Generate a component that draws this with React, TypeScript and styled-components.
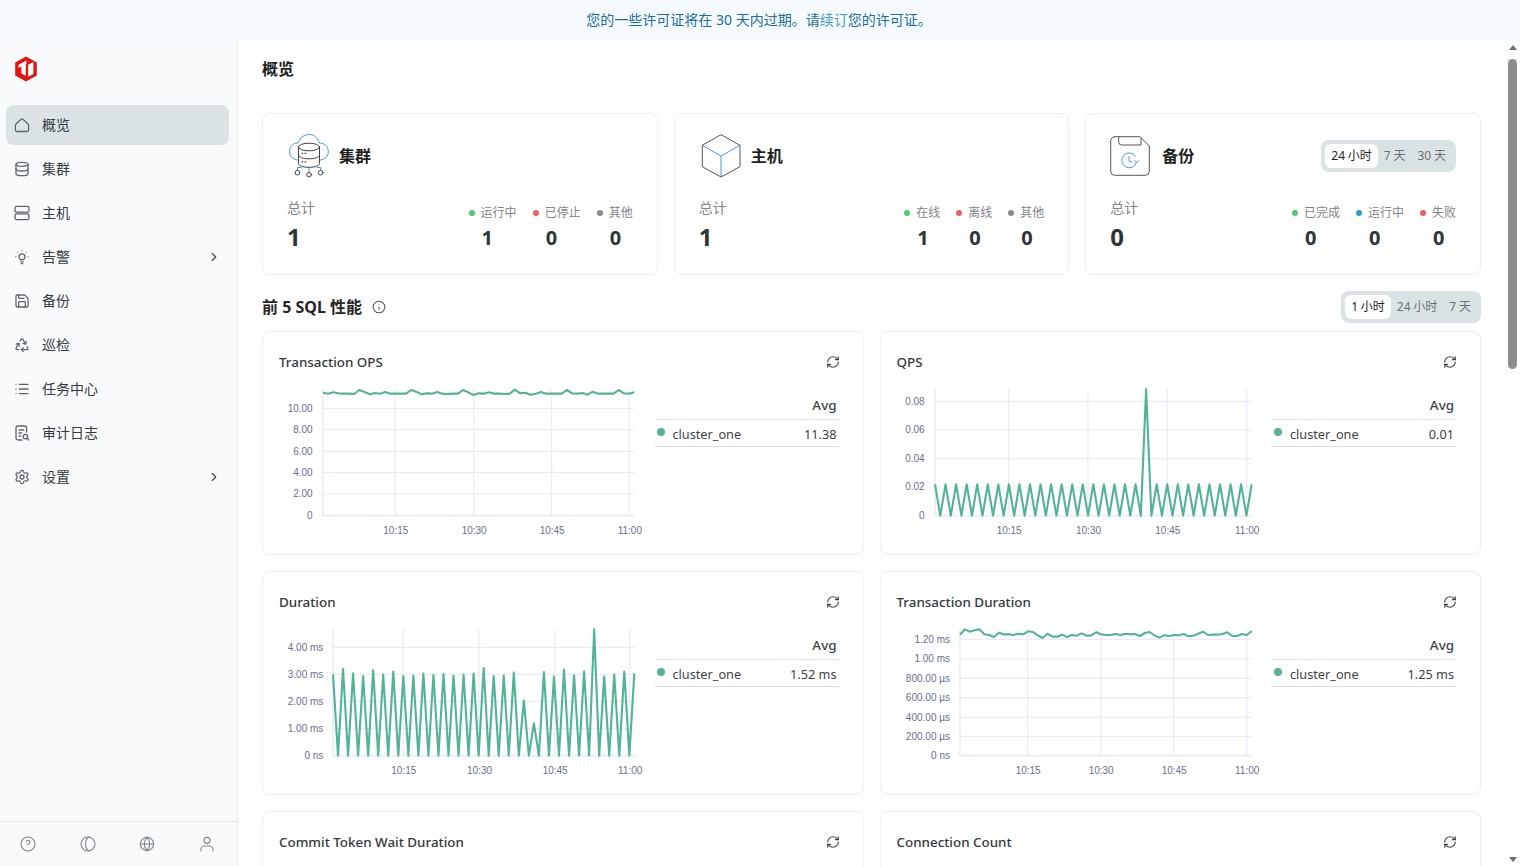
import React from "react";
import styled, { createGlobalStyle } from "styled-components";
import { Database, Recycle, List, Settings, ChevronRight, Globe, RefreshCw, Info, Save } from "lucide-react";

const Global = createGlobalStyle`
  html, body { margin: 0; padding: 0; height: 100%; overflow: hidden; background: #fefefe; }
  body { font-family: "Noto Sans", "Noto Sans CJK SC", sans-serif; color: #262626; }
  * { box-sizing: border-box; }
`;

const Shell = styled.div`
  display: flex;
  flex-direction: column;
  width: 1520px;
  height: 866px;
  overflow: hidden;
`;
const Banner = styled.div`
  height: 41px;
  flex: none;
  background: #f5fafe;
  color: #1c6c9c;
  font-size: 14px;
  line-height: 40px;
  text-align: center;
  padding-right: 2px;
`;
const BannerLink = styled.a`
  color: #4a9bc9;
`;
const Body = styled.div`
  display: flex;
  flex: 1;
  min-height: 0;
`;
const Sidebar = styled.aside`
  width: 238px;
  flex: none;
  display: flex;
  flex-direction: column;
  background: #f9fafc;
  border-right: 1px solid #eef0f2;
`;
const LogoWrap = styled.div`
  height: 64px;
  padding: 15px 0 0 14px;
  display: flex;
  align-items: flex-start;
`;
const Nav = styled.nav`
  display: flex;
  flex-direction: column;
  gap: 4px;
  padding: 0 8px 0 6px;
`;
const NavItem = styled.div<{ $active?: boolean }>`
  height: 40px;
  display: flex;
  align-items: center;
  padding: 0 8px;
  gap: 12px;
  border-radius: 8px;
  font-size: 14px;
  color: #333b3f;
  background: ${(p) => (p.$active ? "#dce3e4" : "transparent")};
  svg { color: #5f6569; flex: none; }
`;
const NavLabel = styled.span`
  flex: 1;
  padding-bottom: 2px;
`;
const NavChevron = styled(ChevronRight)`
  && { color: #3d4347; }
`;
const SideFooter = styled.div`
  margin-top: auto;
  height: 45px;
  border-top: 1px solid #e5e8ea;
  display: flex;
  align-items: center;
  justify-content: space-between;
  padding: 0 22px 0 20px;
  color: #7d8488;
`;
const Main = styled.main`
  flex: 1;
  min-width: 0;
  overflow: hidden;
  padding: 16px 24px 0;
`;
const PageTitle = styled.h1`
  margin: 0 0 32px;
  font-size: 16px;
  line-height: 24px;
  font-weight: 700;
  color: #1f1f1f;
`;
const StatGrid = styled.div`
  display: grid;
  grid-template-columns: repeat(3, 1fr);
  gap: 16px;
`;
const Card = styled.section`
  background: #fff;
  border: 1px solid #edf0f2;
  border-radius: 8px;
`;
const StatCard = styled(Card)`
  height: 162px;
  padding: 19px 24px 20px;
`;
const StatHead = styled.div`
  display: flex;
  align-items: center;
  gap: 8px;
  height: 46px;
`;
const StatTitle = styled.h2`
  margin: 0;
  flex: 1;
  padding-bottom: 2px;
  font-size: 16px;
  font-weight: 700;
  color: #1f1f1f;
`;
const StatBody = styled.div`
  margin-top: 19px;
  display: flex;
  justify-content: space-between;
  align-items: flex-end;
`;
const TotalLabel = styled.div`
  font-size: 14px;
  line-height: 20px;
  color: #7f8487;
`;
const TotalValue = styled.div`
  margin-top: 3px;
  margin-bottom: 1px;
  font-size: 24px;
  line-height: 32px;
  font-weight: 700;
  color: #2f3437;
`;
const SubStats = styled.div`
  display: flex;
  gap: 16px;
  margin-bottom: 2px;
`;
const SubLabel = styled.div`
  display: flex;
  align-items: center;
  gap: 6px;
  margin-top: 1px;
  font-size: 12px;
  line-height: 16px;
  color: #7f8487;
`;
const Dot = styled.i<{ $color: string }>`
  width: 6px;
  height: 6px;
  border-radius: 50%;
  background: ${(p) => p.$color};
`;
const SubValue = styled.div`
  margin-top: 3px;
  padding-left: 13px;
  font-size: 20px;
  line-height: 28px;
  font-weight: 700;
  color: #2f3437;
`;
const Segmented = styled.div`
  display: flex;
  padding: 4px;
  border-radius: 8px;
  background: #dbe2e4;
`;
const Segment = styled.span<{ $active?: boolean }>`
  padding: 0 6px;
  height: 24px;
  line-height: 24px;
  font-size: 12px;
  word-spacing: -0.35px;
  border-radius: 6px;
  white-space: nowrap;
  color: ${(p) => (p.$active ? "#1f1f1f" : "#6b7275")};
  background: ${(p) => (p.$active ? "#fff" : "transparent")};
`;
const SectionRow = styled.div`
  margin: 16px 0 8px;
  height: 32px;
  display: flex;
  align-items: center;
  justify-content: space-between;
`;
const SectionTitle = styled.h2`
  margin: 0;
  display: flex;
  align-items: center;
  gap: 10px;
  padding-bottom: 2px;
  font-size: 16px;
  font-weight: 700;
  color: #262626;
  svg { color: #555; margin-top: 2px; }
`;
const ChartGrid = styled.div`
  display: grid;
  grid-template-columns: repeat(2, 1fr);
  gap: 16px;
`;
const ChartCard = styled(Card)`
  height: 224px;
  padding: 16px;
`;
const ChartHead = styled.div`
  height: 28px;
  display: flex;
  align-items: center;
  justify-content: space-between;
  padding-right: 7px;
  margin-bottom: 4px;
  font-size: 13.4px;
  font-weight: 500;
  color: #33393c;
  svg { color: #444; }
`;
const ChartRow = styled.div`
  display: flex;
  gap: 16px;
`;
const ChartArea = styled.svg`
  flex: 1;
  min-width: 0;
  height: 170px;
  overflow: visible;
`;
const AxisText = styled.text`
  font-family: "Liberation Sans", Arial, sans-serif;
  font-size: 10px;
  fill: #68708c;
`;
const Legend = styled.div`
  width: 184px;
  flex: none;
  margin-right: 8px;
  margin-top: 16px;
  font-size: 12.7px;
  color: #3d4347;
`;
const LegendHead = styled.div`
  height: 24px;
  line-height: 18px;
  text-align: right;
  padding-right: 2px;
  font-size: 13.4px;
  font-weight: 500;
  border-bottom: 1px solid #dcdfea;
`;
const LegendRow = styled.div`
  height: 27px;
  display: flex;
  align-items: center;
  padding: 2px 2px 0 2px;
  border-bottom: 1px solid #dcdfea;
`;
const LegendDot = styled.i`
  width: 8px;
  height: 8px;
  border-radius: 50%;
  background: #52b398;
  margin: 0 8px 4px 0;
`;
const LegendName = styled.span`
  flex: 1;
`;
const ScrollTrack = styled.div`
  width: 15px;
  flex: none;
  display: flex;
  flex-direction: column;
  align-items: center;
  background: #fdfdfd;
`;
const ScrollArrow = styled.i<{ $down?: boolean }>`
  margin-top: ${(p) => (p.$down ? "auto" : "4px")};
  margin-bottom: ${(p) => (p.$down ? "4px" : "0")};
  width: 0;
  height: 0;
  border-left: 4px solid transparent;
  border-right: 4px solid transparent;
  ${(p) => (p.$down ? "border-top: 5px solid #6f6f6f;" : "border-bottom: 5px solid #6f6f6f;")}
`;
const ScrollThumb = styled.div`
  width: 9px;
  height: 310px;
  margin-top: 9px;
  border-radius: 5px;
  background: #8d8d8d;
`;

const Logo = () => (
  <svg width="24" height="26" viewBox="0 0 24 26">
    <polygon points="12,0.5 22.8,6.6 22.8,19.4 12,25.5 1.2,19.4 1.2,6.6" fill="#e1150f" />
    <polygon points="4.6,8.8 12.4,4.4 12.4,8.2 11.8,8.6 11.8,19.8 7.4,17.4 7.4,10.4 4.6,12" fill="#fff" />
    <polygon points="14.2,8.8 19.4,6 19.4,18 14.2,20.8" fill="#fff" />
  </svg>
);

const stroke = { fill: "none", stroke: "currentColor", strokeWidth: 1.3, strokeLinecap: "round", strokeLinejoin: "round" } as const;

const HomeIcon = () => (
  <svg width="16" height="16" viewBox="0 0 16 16" {...stroke}>
    <path d="M2 7 L7 2.3 a1.5 1.5 0 0 1 2 0 L14 7 a1.5 1.5 0 0 1 .6 1.2 V13 a1.5 1.5 0 0 1 -1.5 1.5 H2.9 A1.5 1.5 0 0 1 1.4 13 V8.2 A1.5 1.5 0 0 1 2 7 Z" />
  </svg>
);
const HostIcon = () => (
  <svg width="16" height="16" viewBox="0 0 16 16" {...stroke}>
    <rect x="1" y="1.4" width="14" height="5.8" rx="1.6" />
    <rect x="1" y="8.8" width="14" height="5.8" rx="1.6" />
  </svg>
);
const BulbIcon = () => (
  <svg width="16" height="16" viewBox="0 0 16 16" {...stroke}>
    <path d="M6.4 10.6 C5.8 9.7 5 9.2 5 7.8 a3 3 0 0 1 6 0 C11 9.2 10.2 9.7 9.6 10.6 Z" />
    <path d="M6.8 12.8 H9.2 M7.3 14.6 H8.7" />
    <path d="M8 1.6 V2 M3.3 3.2 L3.6 3.5 M12.7 3.2 L12.4 3.5 M1.6 7.8 H2 M14 7.8 H14.4" strokeWidth={0.9} />
  </svg>
);
const AuditIcon = () => (
  <svg width="16" height="16" viewBox="0 0 16 16" {...stroke}>
    <path d="M8 15 H4 a2 2 0 0 1 -2 -2 V3 a2 2 0 0 1 2 -2 H10.6 a2 2 0 0 1 2 2 V7" />
    <path d="M5 5 H9.6 M5 8 H7.6 M5 11 H6.6" />
    <circle cx="11.4" cy="11.6" r="2.2" />
    <path d="M13 13.3 L14.6 15" />
  </svg>
);
const HelpIcon = () => (
  <svg width="16" height="16" viewBox="0 0 16 16" {...stroke} strokeWidth={1.1}>
    <circle cx="8" cy="8" r="7" />
    <path d="M6.4 5.8 a1.8 1.8 0 1 1 2.4 1.9 C8.2 8 8 8.3 8 8.8" />
  </svg>
);
const MoonIcon = () => (
  <svg width="16" height="16" viewBox="0 0 16 16" {...stroke} strokeWidth={1.1}>
    <circle cx="8" cy="8" r="7" />
    <path d="M9 1.1 C4.4 3.4 4.4 12.6 9 14.9" />
  </svg>
);
const UserIcon = () => (
  <svg width="16" height="16" viewBox="0 0 16 16" {...stroke} strokeWidth={1.1}>
    <circle cx="8" cy="4.4" r="3" />
    <path d="M2 15 V13.6 A3.6 3.6 0 0 1 5.6 10 H10.4 A3.6 3.6 0 0 1 14 13.6 V15" />
  </svg>
);

const ClusterArt = () => (
  <svg width="44" height="46" viewBox="-1 0 44 46" fill="none" strokeLinecap="round" strokeLinejoin="round">
    <g stroke="#4f96db" strokeWidth="1">
      <path d="M10 27 C4 27 1.5 22.5 1.5 18.5 C1.5 13.5 5.2 10 10 10 C12 4.5 16.5 1.5 21 1.5 C26 1.5 30 5 31.3 10 C36.5 10 40.3 13.5 40.3 18.5 C40.3 22.5 37.5 27 32 27" />
      <path d="M9.5 37.4 V34.5 H13 M21 39.3 V35 M32.7 37.4 V34.5 H29" />
    </g>
    <g stroke="#444" strokeWidth="1">
      <ellipse cx="21" cy="14" rx="10.5" ry="3.8" fill="#fff" />
      <path d="M10.5 14 V30.5 C10.5 32.8 15.2 34.3 21 34.3 C26.8 34.3 31.5 32.8 31.5 30.5 V14" />
      <path d="M10.5 22 C10.5 24.3 15.2 25.8 21 25.8 C26.8 25.8 31.5 24.3 31.5 22" />
      <circle cx="9.4" cy="39.7" r="2.3" />
      <circle cx="21" cy="41.7" r="2.3" />
      <circle cx="32.7" cy="39.7" r="2.3" />
      <path d="M14 20.3 H14.8 M17 20.3 H17.8 M14 28.8 H14.8 M17 28.8 H17.8" strokeWidth="1.2" />
    </g>
  </svg>
);
const CubeArt = () => (
  <svg width="44" height="46" viewBox="-1 0 44 46" fill="none" strokeLinejoin="round">
    <path d="M2.3 12.3 L21 23 L40 12.3 M21 23 V44" stroke="#4f96db" strokeWidth="1" />
    <path d="M21 1.7 L40 12.3 V33.7 L21 44 L2.3 33.7 V12.3 Z" stroke="#555" strokeWidth="1" />
  </svg>
);
const BackupArt = () => (
  <svg width="44" height="46" viewBox="0 0 44 46" fill="none" strokeLinecap="round" strokeLinejoin="round">
    <path d="M4.7 3.7 H30 L39.3 13 V38.3 a4 4 0 0 1 -4 4 H4.7 a4 4 0 0 1 -4 -4 V7.7 a4 4 0 0 1 4 -4 Z" stroke="#555" strokeWidth="1" />
    <path d="M8.7 3.7 V9 a3 3 0 0 0 3 3 H31 V5" stroke="#555" strokeWidth="1" />
    <g stroke="#4f96db" strokeWidth="1">
      <path d="M26.6 29 A7.5 7.5 0 1 1 25.4 23" />
      <path d="M19 23.6 V27.8 L22 29.2" />
      <path d="M24.8 27.6 L26.7 29.6 L28.6 27.6" />
    </g>
  </svg>
);

type ChartConfig = {
  title: string;
  value: string;
  rowOffset: number;
  left: number;
  right: number;
  top: number;
  bottom: number;
  labelRight: number;
  labelY: number;
  yTicks: [string, number][];
  xTicks: number[];
  ys: number[];
};

const seqX = ["10:15", "10:30", "10:45", "11:00"];
const GRID = "#e9ecf6";

const sx = (z: number) => -17 + z / 3;

const Chart = ({ c }: { c: ChartConfig }) => {
  const sy = (z: number) => c.rowOffset + z / 3;
  const step = (c.right - c.left) / (c.ys.length - 1);
  const pts = c.ys.map((y, i) => `${sx(c.left + step * i).toFixed(2)},${sy(y).toFixed(2)}`).join(" ");
  return (
    <ChartCard>
      <ChartHead>
        {c.title}
        <RefreshCw size={14} strokeWidth={2} />
      </ChartHead>
      <ChartRow>
        <ChartArea>
          {c.yTicks.map(([label, z]) => (
            <g key={label}>
              <line x1={sx(c.left)} x2={sx(c.right)} y1={sy(z)} y2={sy(z)} stroke={GRID} strokeWidth={z === c.bottom ? 1.6 : 1.2} />
              <AxisText x={sx(c.labelRight)} y={sy(z) + 3.4} textAnchor="end">{label}</AxisText>
            </g>
          ))}
          <line x1={sx(c.left)} x2={sx(c.left)} y1={sy(c.top)} y2={sy(c.bottom)} stroke={GRID} strokeWidth={1.6} />
          {c.xTicks.map((z, i) => (
            <g key={z}>
              <line x1={sx(z)} x2={sx(z)} y1={sy(c.top)} y2={sy(c.bottom)} stroke={GRID} strokeWidth={1.2} />
              <AxisText x={sx(z) + 0.5} y={sy(c.labelY) + 3.8} textAnchor="middle">{seqX[i]}</AxisText>
            </g>
          ))}
          <polyline points={pts} fill="none" stroke="#52b398" strokeWidth={2.1} strokeLinejoin="round" />
        </ChartArea>
        <Legend>
          <LegendHead>Avg</LegendHead>
          <LegendRow>
            <LegendDot />
            <LegendName>cluster_one</LegendName>
            {c.value}
          </LegendRow>
        </Legend>
      </ChartRow>
    </ChartCard>
  );
};

const qps = Array.from({ length: 61 }, (_, i) => (i === 40 ? 148 : i % 2 === 0 ? 433 : 527));
const durTops = [253, 237, 250, 258, 241, 254, 245, 258, 257, 251, 255, 252, 257, 254, 251, 234, 258, 257, 248, 332, 400, 246, 260, 239, 256, 245, 118, 260, 253, 245, 250];
const duration = durTops.flatMap((t, i) => (i === durTops.length - 1 ? [t] : [t, 497]));

const charts: ChartConfig[] = [
  {
    title: "Transaction OPS", value: "11.38", rowOffset: -40, left: 183, right: 1117, top: 148, bottom: 527, labelRight: 152, labelY: 572,
    yTicks: [["10.00", 205], ["8.00", 269], ["6.00", 334], ["4.00", 398], ["2.00", 462], ["0", 527]],
    xTicks: [400, 635, 869, 1102],
    ys: [158, 161, 157, 160, 161, 161, 162, 150, 156, 163, 159, 161, 156, 161, 161, 161, 161, 150, 155, 163, 160, 161, 156, 161, 162, 161, 161, 150, 157, 165, 160, 161, 157, 161, 161, 162, 161, 149, 160, 158, 164, 161, 156, 161, 161, 161, 161, 150, 160, 161, 159, 164, 155, 161, 161, 161, 161, 150, 160, 161, 157],
  },
  {
    title: "QPS", value: "0.01", rowOffset: -40, left: 165, right: 1115, top: 148, bottom: 527, labelRight: 134, labelY: 572,
    yTicks: [["0.08", 184], ["0.06", 270], ["0.04", 356], ["0.02", 441], ["0", 527]],
    xTicks: [386, 624, 862, 1100],
    ys: qps,
  },
  {
    title: "Duration", value: "1.52 ms", rowOffset: -30, left: 213, right: 1117, top: 118, bottom: 497, labelRight: 184, labelY: 542,
    yTicks: [["4.00 ms", 172], ["3.00 ms", 253], ["2.00 ms", 334], ["1.00 ms", 416], ["0 ns", 497]],
    xTicks: [424, 651, 878, 1103],
    ys: duration,
  },
  {
    title: "Transaction Duration", value: "1.25 ms", rowOffset: -30, left: 240, right: 1115, top: 118, bottom: 497, labelRight: 210, labelY: 542,
    yTicks: [["1.20 ms", 148], ["1.00 ms", 207], ["800.00 µs", 265], ["600.00 µs", 323], ["400.00 µs", 382], ["200.00 µs", 439], ["0 ns", 497]],
    xTicks: [443, 662, 881, 1100],
    ys: [134, 118, 125, 121, 118, 133, 135, 141, 128, 133, 133, 135, 131, 133, 124, 126, 136, 144, 131, 140, 140, 134, 141, 135, 137, 130, 137, 136, 127, 133, 135, 135, 132, 135, 131, 133, 132, 138, 129, 126, 136, 143, 136, 138, 135, 136, 132, 139, 137, 131, 125, 135, 134, 134, 132, 127, 138, 138, 132, 135, 123],
  },
];

const GREEN = "#4fcb71";
const RED = "#ef5b5f";
const GRAY = "#8a8a8a";
const BLUE = "#2a9bd6";

type Stat = { title: string; art: React.ReactNode; total: number; subs: [string, string, number][]; range?: boolean };
const stats: Stat[] = [
  { title: "集群", art: <ClusterArt />, total: 1, subs: [["运行中", GREEN, 1], ["已停止", RED, 0], ["其他", GRAY, 0]] },
  { title: "主机", art: <CubeArt />, total: 1, subs: [["在线", GREEN, 1], ["离线", RED, 0], ["其他", GRAY, 0]] },
  { title: "备份", art: <BackupArt />, total: 0, subs: [["已完成", GREEN, 0], ["运行中", BLUE, 0], ["失败", RED, 0]], range: true },
];

const navItems: [string, React.ReactNode, boolean?][] = [
  ["概览", <HomeIcon />],
  ["集群", <Database size={16} strokeWidth={1.9} />],
  ["主机", <HostIcon />],
  ["告警", <BulbIcon />, true],
  ["备份", <Save size={16} strokeWidth={1.9} />],
  ["巡检", <Recycle size={16} strokeWidth={1.9} />],
  ["任务中心", <List size={16} strokeWidth={1.9} />],
  ["审计日志", <AuditIcon />],
  ["设置", <Settings size={16} strokeWidth={1.9} />, true],
];

export default function App() {
  return (
    <Shell>
      <Global />
      <Banner>
        您的一些许可证将在 30 天内过期。请<BannerLink>续订</BannerLink>您的许可证。
      </Banner>
      <Body>
        <Sidebar>
          <LogoWrap><Logo /></LogoWrap>
          <Nav>
            {navItems.map(([label, icon, more], i) => (
              <NavItem key={label} $active={i === 0}>
                {icon}
                <NavLabel>{label}</NavLabel>
                {more && <NavChevron size={14} strokeWidth={2} />}
              </NavItem>
            ))}
          </Nav>
          <SideFooter>
            <HelpIcon />
            <MoonIcon />
            <Globe size={16} strokeWidth={1.7} />
            <UserIcon />
          </SideFooter>
        </Sidebar>
        <Main>
          <PageTitle>概览</PageTitle>
          <StatGrid>
            {stats.map((s) => (
              <StatCard key={s.title}>
                <StatHead>
                  {s.art}
                  <StatTitle>{s.title}</StatTitle>
                  {s.range && (
                    <Segmented>
                      <Segment $active>24 小时</Segment>
                      <Segment>7 天</Segment>
                      <Segment>30 天</Segment>
                    </Segmented>
                  )}
                </StatHead>
                <StatBody>
                  <div>
                    <TotalLabel>总计</TotalLabel>
                    <TotalValue>{s.total}</TotalValue>
                  </div>
                  <SubStats>
                    {s.subs.map(([label, color, value]) => (
                      <div key={label}>
                        <SubLabel><Dot $color={color} />{label}</SubLabel>
                        <SubValue>{value}</SubValue>
                      </div>
                    ))}
                  </SubStats>
                </StatBody>
              </StatCard>
            ))}
          </StatGrid>
          <SectionRow>
            <SectionTitle>前 5 SQL 性能 <Info size={14} strokeWidth={1.8} /></SectionTitle>
            <Segmented>
              <Segment $active>1 小时</Segment>
              <Segment>24 小时</Segment>
              <Segment>7 天</Segment>
            </Segmented>
          </SectionRow>
          <ChartGrid>
            {charts.map((c) => <Chart key={c.title} c={c} />)}
            {["Commit Token Wait Duration", "Connection Count"].map((t) => (
              <ChartCard key={t}>
                <ChartHead>
                  {t}
                  <RefreshCw size={14} strokeWidth={2} />
                </ChartHead>
              </ChartCard>
            ))}
          </ChartGrid>
        </Main>
        <ScrollTrack>
          <ScrollArrow />
          <ScrollThumb />
          <ScrollArrow $down />
        </ScrollTrack>
      </Body>
    </Shell>
  );
}
